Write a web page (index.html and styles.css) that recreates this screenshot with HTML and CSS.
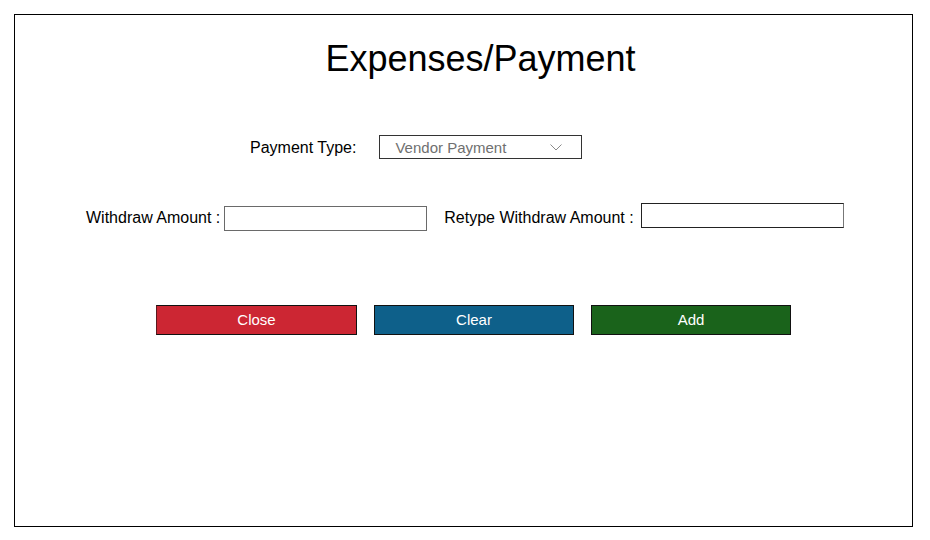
FILE: index.html
```html
<!DOCTYPE html>
<html>
<head>
<meta charset="utf-8">
<link rel="stylesheet" href="styles.css">
</head>
<body>
<div class="frame">
  <h1 class="title">Expenses/Payment</h1>
  <div class="row row-type">
    <span class="label label-type">Payment Type:</span>
    <div class="select">
      <span class="select-text">Vendor Payment</span>
      <svg class="chev" width="12" height="7" viewBox="0 0 12 7"><polyline points="0.5,0.5 6,6 11.5,0.5" fill="none" stroke="#8a8a8a" stroke-width="1"/></svg>
    </div>
  </div>
  <div class="row row-amount">
    <span class="label label-w">Withdraw Amount :</span>
    <input class="field field-w" type="text">
    <span class="label label-r">Retype Withdraw Amount :</span>
    <input class="field field-r" type="text">
  </div>
  <div class="row row-buttons">
    <button class="btn btn-close">Close</button>
    <button class="btn btn-clear">Clear</button>
    <button class="btn btn-add">Add</button>
  </div>
</div>
</body>
</html>
```

FILE: styles.css
```css
html, body {
  margin: 0;
  padding: 0;
  background: #fff;
}
body {
  font-family: "Liberation Sans", Arial, sans-serif;
  color: #000;
}
.frame {
  margin: 14px 0 0 14px;
  width: 897px;
  height: 511px;
  border: 1px solid #000;
  display: flex;
  flex-direction: column;
}
.title {
  margin: 23px 0 0 0;
  padding-left: 34px;
  font-size: 36px;
  font-weight: normal;
  line-height: 42px;
  text-align: center;
}
.row {
  display: flex;
  align-items: center;
}
.label {
  font-size: 16px;
  line-height: 20px;
  white-space: nowrap;
}
.row-type {
  margin-top: 55px;
  padding-left: 235px;
  height: 24px;
}
.label-type {
  margin-right: 23px;
  padding-top: 2px;
}
.select {
  box-sizing: border-box;
  width: 203px;
  height: 24px;
  border: 1px solid #333;
  display: flex;
  align-items: center;
  justify-content: space-between;
  padding: 0 19px 0 15px;
}
.select-text {
  font-size: 15px;
  color: #707070;
}
.chev {
  display: block;
  margin-top: 1px;
}
.row-amount {
  margin-top: 47px;
  padding-left: 71px;
  height: 24px;
}
.field {
  box-sizing: border-box;
  width: 203px;
  height: 25px;
  margin: 0;
  padding: 0;
  background: #fff;
  outline: none;
}
.field-w {
  margin-left: 4px;
  border: 1px solid #6a6a6a;
}
.label-r {
  margin-left: 17px;
}
.field-r {
  margin-left: 7px;
  margin-bottom: 6px;
  border: 1px solid #222;
  border-right-color: #777;
}
.row-buttons {
  margin-top: 75px;
  padding-left: 141px;
  gap: 17px;
}
.btn {
  box-sizing: border-box;
  width: 200px;
  height: 30px;
  border: 1px solid #111;
  margin: 0;
  padding: 0;
  color: #fff;
  font-family: "Liberation Sans", Arial, sans-serif;
  font-size: 15px;
  line-height: 28px;
  text-align: center;
}
.btn-close {
  width: 201px;
  background: #cc2633;
  border-left-color: #5a1a1f;
}
.btn-clear {
  background: #0e608a;
}
.btn-add {
  background: #1a631b;
}
```
